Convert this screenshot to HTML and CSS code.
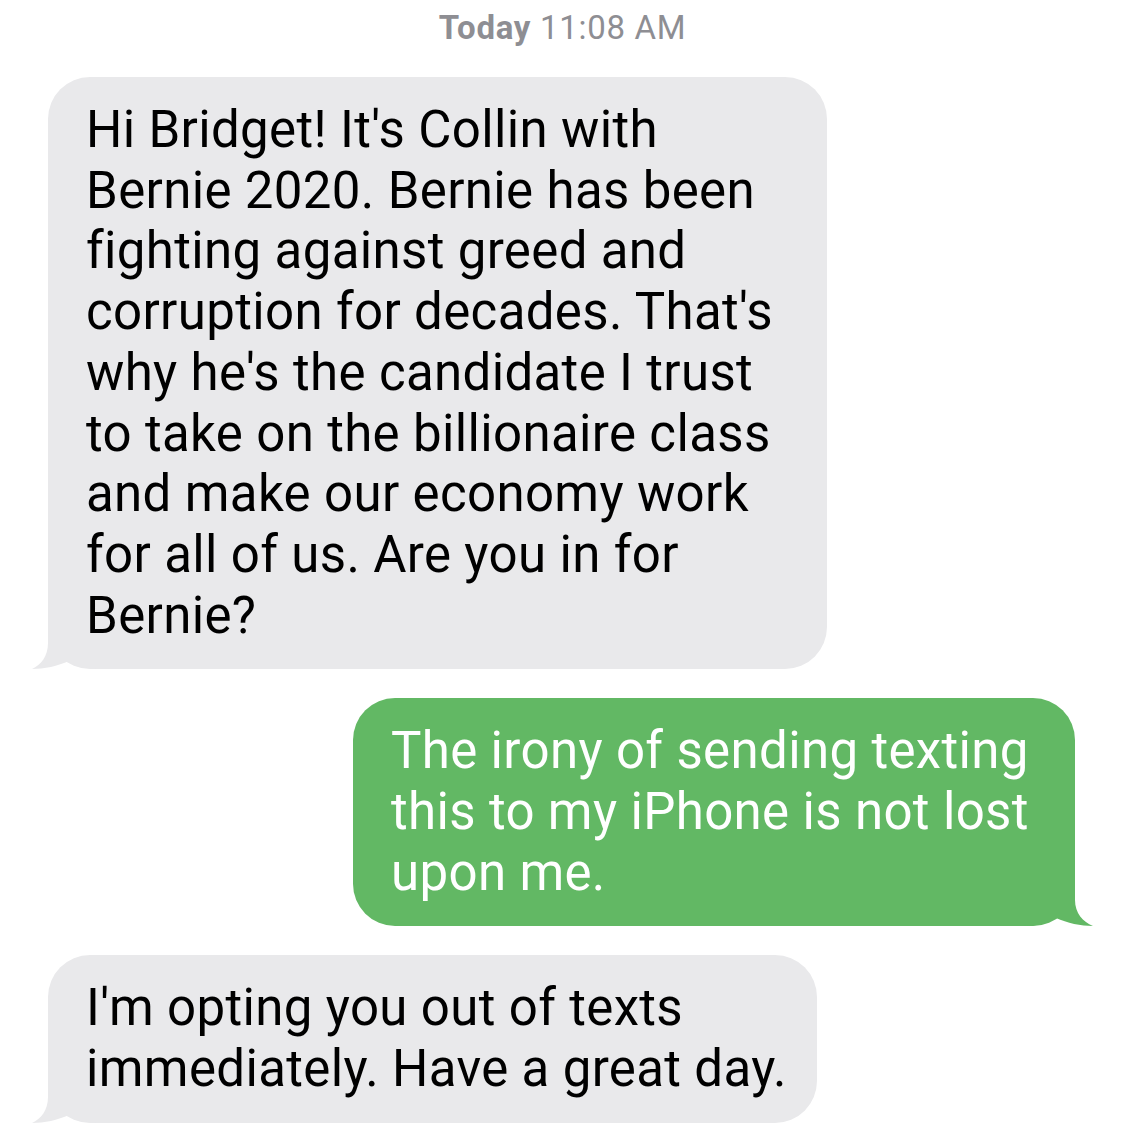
FILE: index.html
```html
<!DOCTYPE html>
<html lang="en">
<head>
  <meta charset="UTF-8">
  <meta name="viewport" content="width=device-width, initial-scale=1.0">
  <title>Messages</title>
  <link rel="stylesheet" href="styles.css">
</head>
<body>
  <div class="thread">
    <div class="stamp"><b>Today</b> 11:08 AM</div>

    <div class="bubble in msg-1">
      Hi Bridget! It's Collin with<br>
      Bernie 2020. Bernie has been<br>
      fighting against greed and<br>
      corruption for decades. That's<br>
      why he's the candidate I trust<br>
      to take on the billionaire class<br>
      and make our economy work<br>
      for all of us. Are you in for<br>
      Bernie?
      <svg class="tail" viewBox="0 0 70 60"><path d="M16 0 L16 34 C16 47 9 56 0 60 C12 60 26 57 37 52 C46 57 55 60 70 60 L70 0 Z"/></svg>
    </div>

    <div class="bubble out msg-2">
      The irony of sending texting<br>
      this to my iPhone is not lost<br>
      upon me.
      <svg class="tail" viewBox="0 0 70 60"><path d="M52 0 L52 34 C52 47 60 56 70 60 C58 60 44 57 33 52 C24 57 15 60 0 60 L0 0 Z"/></svg>
    </div>

    <div class="bubble in msg-3">
      I'm opting you out of texts<br>
      immediately. Have a great day.
      <svg class="tail" viewBox="0 0 70 60"><path d="M16 0 L16 34 C16 47 9 56 0 60 C12 60 26 57 37 52 C46 57 55 60 70 60 L70 0 Z"/></svg>
    </div>
  </div>
</body>
</html>
```

FILE: styles.css
```css
*, *::before, *::after { box-sizing: border-box; }
html, body {
  margin: 0; padding: 0;
  background: #fff;
  font-family: Roboto, 'Liberation Sans', sans-serif;
}
.thread {
  display: flex;
  flex-direction: column;
  padding: 8px 0 0 48px;
}
.stamp {
  align-self: center;
  margin-left: -48px;
  font-size: 33px;
  line-height: 40px;
  letter-spacing: 0.7px;
  color: #8e8e93;
  margin-bottom: 29px;
}
.stamp b {
  font-weight: 700;
}
.bubble {
  position: relative;
  z-index: 0;
  padding: 23px 38px;
  border-radius: 42px;
  font-size: 51px;
  line-height: 60.7px;
  letter-spacing: 0.35px;
  white-space: nowrap;
  margin-bottom: 29px;
}
.bubble .tail {
  position: absolute;
  z-index: -1;
  bottom: 0;
  width: 70px;
  height: 60px;
}
.in {
  align-self: flex-start;
  background: #e9e9eb;
  color: #000;
}
.in .tail {
  left: -16px;
  fill: #e9e9eb;
}
.out {
  align-self: flex-start;
  margin-left: 305px;
  background: #62b864;
  color: #fff;
}
.out .tail {
  right: -18px;
  fill: #62b864;
}
.msg-1 { width: 779px; }
.msg-2 { width: 722px; }
.msg-3 { width: 769px; }
```
